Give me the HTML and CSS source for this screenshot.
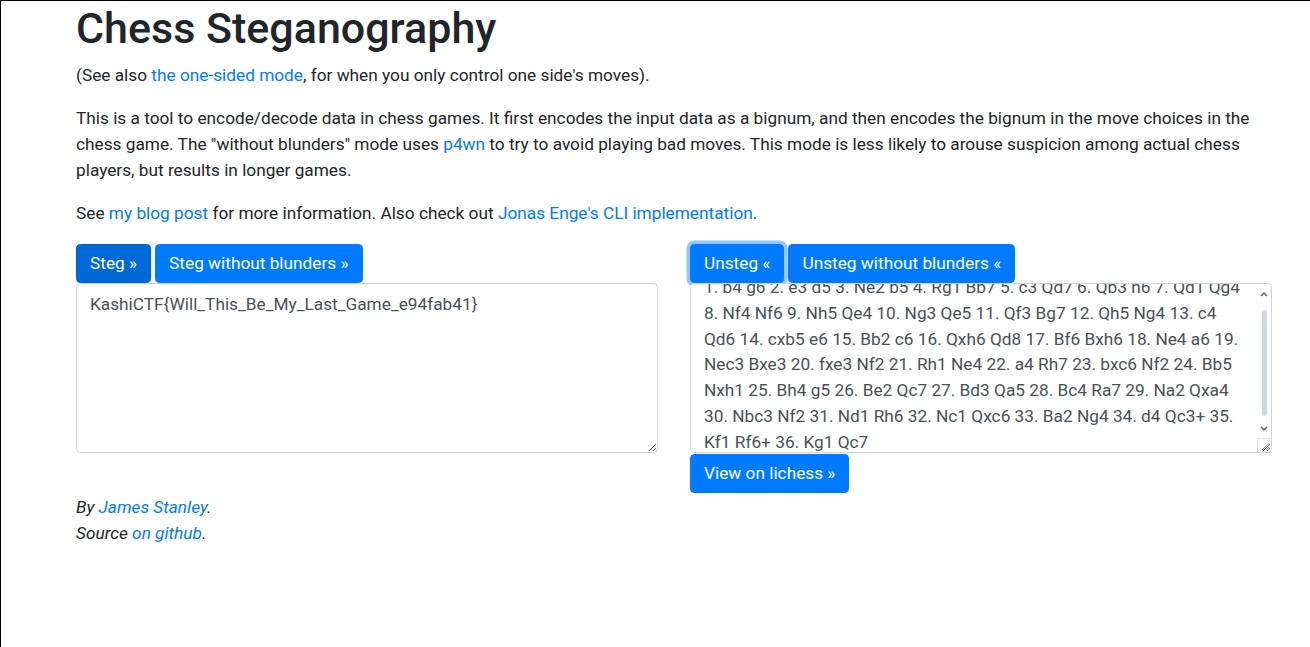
FILE: index.html
```html
<!DOCTYPE html>
<html lang="en">
<head>
<meta charset="utf-8">
<title>Chess Steganography</title>
<link rel="stylesheet" href="styles.css">
</head>
<body>
<div class="frame">
  <div class="container">
    <h1 class="title">Chess Steganography</h1>
    <p class="para">(See also <a href="#">the one-sided mode</a>, for when you only control one side's moves).</p>
    <p class="para">This is a tool to encode/decode data in chess games. It first encodes the input data as a bignum, and then encodes the bignum in the move choices in the chess game. The "without blunders" mode uses <a href="#">p4wn</a> to try to avoid playing bad moves. This mode is less likely to arouse suspicion among actual chess players, but results in longer games.</p>
    <p class="para">See <a href="#">my blog post</a> for more information. Also check out <a href="#">Jonas Enge's CLI implementation</a>.</p>

    <div class="row">
      <div class="col">
        <div class="btn-row">
          <button class="btn btn-dark">Steg &raquo;</button>
          <button class="btn">Steg without blunders &raquo;</button>
        </div>
        <textarea class="box">KashiCTF{Will_This_Be_My_Last_Game_e94fab41}</textarea>
      </div>
      <div class="col">
        <div class="btn-row">
          <button class="btn btn-focus">Unsteg &laquo;</button>
          <button class="btn">Unsteg without blunders &laquo;</button>
        </div>
        <div class="box box-scroll">
          <div class="scroll-text">1. b4 g6 2. e3 d5 3. Ne2 b5 4. Rg1 Bb7 5. c3 Qd7 6. Qb3 h6 7. Qd1 Qg4 8. Nf4 Nf6 9. Nh5 Qe4 10. Ng3 Qe5 11. Qf3 Bg7 12. Qh5 Ng4 13. c4 Qd6 14. cxb5 e6 15. Bb2 c6 16. Qxh6 Qd8 17. Bf6 Bxh6 18. Ne4 a6 19. Nec3 Bxe3 20. fxe3 Nf2 21. Rh1 Ne4 22. a4 Rh7 23. bxc6 Nf2 24. Bb5 Nxh1 25. Bh4 g5 26. Be2 Qc7 27. Bd3 Qa5 28. Bc4 Ra7 29. Na2 Qxa4 30. Nbc3 Nf2 31. Nd1 Rh6 32. Nc1 Qxc6 33. Ba2 Ng4 34. d4 Qc3+ 35. Kf1 Rf6+ 36. Kg1 Qc7</div>
          <div class="sb">
            <svg class="sb-up" width="8" height="6" viewBox="0 0 8 6"><polyline points="1,5 4,2 7,5" fill="none" stroke="#606060" stroke-width="1.4"/></svg>
            <div class="sb-thumb"></div>
            <svg class="sb-down" width="8" height="6" viewBox="0 0 8 6"><polyline points="1,1 4,4 7,1" fill="none" stroke="#606060" stroke-width="1.4"/></svg>
          </div>
          <div class="grip">
            <svg width="14" height="14" viewBox="0 0 14 14"><line x1="5" y1="12" x2="12" y2="5" stroke="#909090" stroke-width="1"/><line x1="9" y1="12" x2="12" y2="9" stroke="#909090" stroke-width="1"/></svg>
          </div>
        </div>
        <div class="lichess-wrap">
          <button class="btn">View on lichess &raquo;</button>
        </div>
      </div>
    </div>

    <p class="footer"><em>By <a href="#">James Stanley</a>.<br>Source <a href="#">on github</a>.</em></p>
  </div>
</div>
</body>
</html>
```
FILE: styles.css
```css
html, body {
  margin: 0;
  padding: 0;
  background: #fff;
}
body {
  font-family: Roboto, "Liberation Sans", sans-serif;
  font-size: 17.25px;
  line-height: 25.875px;
  color: #212529;
}
.frame {
  box-sizing: border-box;
  height: 647px;
  overflow: hidden;
  border-top: 1px solid #000;
  border-left: 1px solid #000;
}
.container {
  width: 1196px;
  padding-left: 75px;
  padding-top: 2px;
}
.title {
  margin: 0 0 8.6px;
  font-size: 43px;
  line-height: 51.6px;
  font-weight: 500;
  color: #212529;
}
.para {
  margin: 0 0 17.25px;
}
a {
  color: #007bff;
  text-decoration: none;
}
.row {
  display: flex;
  gap: 32px;
}
.col {
  width: 582px;
  display: flex;
  flex-direction: column;
  align-items: stretch;
}
.btn-row {
  display: flex;
  gap: 4px;
}
.btn {
  font-family: Roboto, "Liberation Sans", sans-serif;
  font-size: 17.25px;
  line-height: 25px;
  padding: 6px 13px;
  border: 1px solid #007bff;
  background: #007bff;
  color: #fff;
  border-radius: 4.3px;
  cursor: pointer;
}
.btn-dark {
  background: #0069d9;
  border-color: #0062cc;
}
.btn-focus {
  box-shadow: 0 0 0 3.5px rgba(38, 143, 255, 0.5);
}
.box {
  display: block;
  box-sizing: border-box;
  width: 100%;
  height: 170px;
  margin: 0;
  padding: 7.5px 13px;
  border: 1px solid #ced4da;
  border-radius: 4.3px;
  font-family: Roboto, "Liberation Sans", sans-serif;
  font-size: 17.25px;
  line-height: 25.875px;
  color: #495057;
  background: #fff;
  resize: vertical;
  outline: none;
}
.box-scroll {
  position: relative;
  overflow: hidden;
  padding: 0;
}
.scroll-text {
  padding: 7.5px 22px 7.5px 13px;
  transform: translateY(-17px);
}
.sb {
  position: absolute;
  top: 0;
  right: 0;
  bottom: 14px;
  width: 14px;
}
.sb-up {
  position: absolute;
  top: 7px;
  left: 3px;
}
.sb-down {
  position: absolute;
  bottom: 6px;
  left: 3px;
}
.sb-thumb {
  position: absolute;
  top: 26px;
  left: 5px;
  width: 5px;
  height: 106px;
  border-radius: 3px;
  background: #cfd7df;
}
.grip {
  position: absolute;
  right: 0;
  bottom: 0;
  width: 14px;
  height: 14px;
  box-sizing: border-box;
  border-top: 1px solid #e2e2e2;
  border-left: 1px solid #e2e2e2;
  background: #fafafa;
}
.grip svg {
  display: block;
  margin: -1px 0 0 -1px;
}
.lichess-wrap {
  display: flex;
  margin-top: 1px;
}
.footer {
  margin: 2px 0 0;
}
```
